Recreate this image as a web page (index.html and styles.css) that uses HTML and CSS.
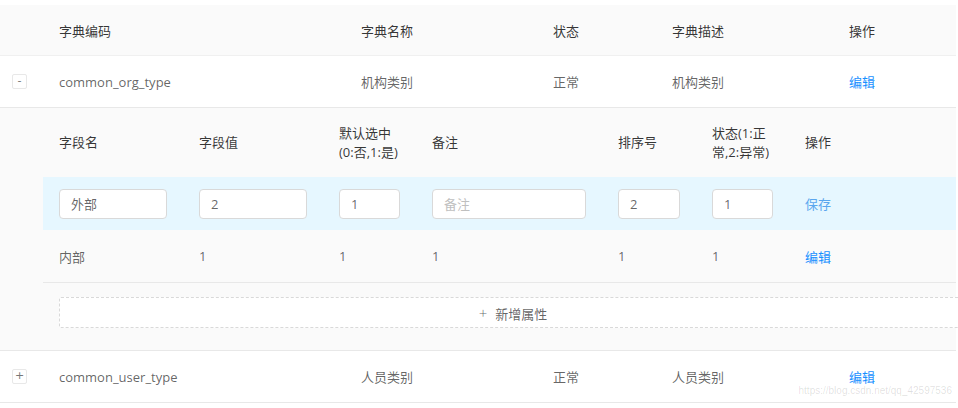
FILE: index.html
```html
<!DOCTYPE html>
<html lang="zh-CN">
<head>
  <meta charset="UTF-8" />
  <title>数据字典</title>
  <link rel="stylesheet" href="styles.css">
</head>
<body>
  <div class="page">
    <table class="dict-table">
      <colgroup>
        <col style="width: 43px" />
        <col style="width: 302px" />
        <col style="width: 192px" />
        <col style="width: 119px" />
        <col style="width: 177px" />
        <col />
      </colgroup>
      <thead>
        <tr>
          <th></th>
          <th>字典编码</th>
          <th>字典名称</th>
          <th>状态</th>
          <th>字典描述</th>
          <th>操作</th>
        </tr>
      </thead>
      <tbody>
        <tr>
          <td class="expand-cell"><span class="expand-btn">-</span></td>
          <td>common_org_type</td>
          <td>机构类别</td>
          <td>正常</td>
          <td>机构类别</td>
          <td><a class="link">编辑</a></td>
        </tr>

        <!-- expanded row -->
        <tr class="expanded-row">
          <td class="spacer"></td>
          <td colspan="5" class="expanded-cell">
            <table class="field-table">
              <colgroup>
                <col style="width: 140px" />
                <col style="width: 140px" />
                <col style="width: 93px" />
                <col style="width: 186px" />
                <col style="width: 94px" />
                <col style="width: 93px" />
                <col />
              </colgroup>
              <thead>
                <tr>
                  <th>字段名</th>
                  <th>字段值</th>
                  <th>默认选中<br>(0:否,1:是)</th>
                  <th>备注</th>
                  <th>排序号</th>
                  <th>状态(1:正<br>常,2:异常)</th>
                  <th>操作</th>
                </tr>
              </thead>
              <tbody>
                <tr class="editing">
                  <td><input class="field-input" value="外部" /></td>
                  <td><input class="field-input" value="2" /></td>
                  <td><input class="field-input" value="1" /></td>
                  <td><input class="field-input" placeholder="备注" /></td>
                  <td><input class="field-input" value="2" /></td>
                  <td><input class="field-input" value="1" /></td>
                  <td><a class="link save">保存</a></td>
                </tr>
                <tr>
                  <td>内部</td>
                  <td>1</td>
                  <td>1</td>
                  <td>1</td>
                  <td>1</td>
                  <td>1</td>
                  <td><a class="link">编辑</a></td>
                </tr>
              </tbody>
            </table>
            <div class="add-wrap">
              <button class="add-btn"><span class="plus">+</span>新增属性</button>
            </div>
          </td>
        </tr>

        <tr>
          <td class="expand-cell"><span class="expand-btn">+</span></td>
          <td>common_user_type</td>
          <td>人员类别</td>
          <td>正常</td>
          <td>人员类别</td>
          <td><a class="link">编辑</a></td>
        </tr>
      </tbody>
    </table>

    <div class="watermark">https://blog.csdn.net/qq_42597536</div>
  </div>
</body>
</html>
```

FILE: styles.css
```css
body {
  margin: 0;
  padding: 0;
  background: #fff;
  font-family: 'Open Sans', 'Noto Sans CJK SC', sans-serif;
  font-size: 13px;
  color: rgba(0, 0, 0, 0.62);
  overflow: hidden;
}

.page {
  position: relative;
  padding-top: 5px;
  height: 403px;
}

table {
  border-collapse: collapse;
  table-layout: fixed;
}

.dict-table {
  width: 956px;
}

.dict-table > thead > tr > th {
  height: 50px;
  padding: 0 16px;
  background: #fafafa;
  color: rgba(0, 0, 0, 0.8);
  font-weight: normal;
  text-align: left;
  border-bottom: 1px solid #f0f0f0;
}

.dict-table > tbody > tr > td {
  height: 51px;
  padding: 0 16px;
  border-bottom: 1px solid #e8e8e8;
}

.dict-table > tbody > tr > td.expand-cell {
  padding: 0 0 0 12px;
}

.expand-btn {
  display: block;
  width: 13px;
  height: 13px;
  line-height: 12px;
  border: 1px solid #e8e8e8;
  border-radius: 2px;
  background: #fff;
  text-align: center;
  font-size: 11px;
  color: #777;
  font-family: 'DejaVu Sans', sans-serif;
}

.link {
  color: #1890ff;
  cursor: pointer;
}

.link.save {
  color: #5aa6ee;
}

/* expanded row */
.dict-table > tbody > tr.expanded-row > td {
  height: auto;
  padding: 0;
  background: #fafafa;
  vertical-align: top;
}

.field-table {
  width: 913px;
}

.field-table th {
  height: 69px;
  padding: 0 16px;
  background: #fafafa;
  color: rgba(0, 0, 0, 0.8);
  font-weight: normal;
  text-align: left;
  line-height: 19px;
}

.field-table td {
  height: 52px;
  padding: 0 16px;
  border-bottom: 1px solid #e8e8e8;
}

.field-table tr.editing td {
  height: 53px;
  background: #e6f7ff;
  border-bottom: none;
}

.field-input {
  display: block;
  box-sizing: border-box;
  width: 100%;
  height: 30px;
  padding: 0 11px;
  border: 1px solid #d9d9d9;
  border-radius: 4px;
  background: #fff;
  font-family: inherit;
  font-size: 13px;
  color: rgba(0, 0, 0, 0.62);
  outline: none;
}

.field-input::placeholder {
  color: #bfbfbf;
}

.add-wrap {
  padding: 14px 0 22px 16px;
}

.add-btn {
  display: block;
  box-sizing: border-box;
  width: 908px;
  height: 31px;
  border: 1px dashed #d9d9d9;
  border-radius: 2px;
  background: #fff;
  font-family: inherit;
  font-size: 13px;
  color: rgba(0, 0, 0, 0.62);
  cursor: pointer;
}

.add-btn .plus {
  margin-right: 8px;
  font-size: 15px;
  font-weight: 300;
}

.watermark {
  position: absolute;
  right: 6px;
  top: 385px;
  font-family: 'Liberation Sans', sans-serif;
  font-size: 10px;
  color: rgba(0, 0, 0, 0.13);
}
```
